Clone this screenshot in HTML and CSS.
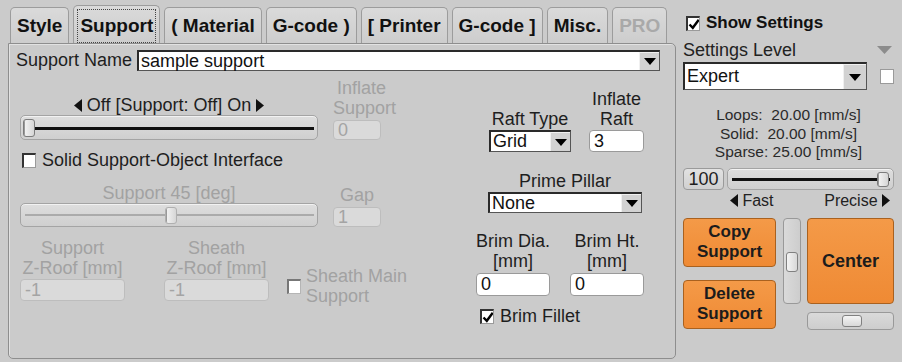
FILE: index.html
```html
<!DOCTYPE html>
<html lang="en">
<head>
  <meta charset="UTF-8">
  <title>Support Settings</title>
  <link rel="stylesheet" href="styles.css">
</head>
<body>
  <div class="app">
    <div class="main">
      <div class="tabs">
        <div class="tab">Style</div>
        <div class="tab active"><span>Support</span></div>
        <div class="tab">( Material</div>
        <div class="tab">G-code )</div>
        <div class="tab">[ Printer</div>
        <div class="tab">G-code ]</div>
        <div class="tab">Misc.</div>
        <div class="tab off">PRO</div>
      </div>

      <div class="panel">
        <div class="name-row">
          <span class="lbl">Support Name</span>
          <div class="select wide"><span class="val">sample support</span><i class="drop"></i></div>
        </div>

        <div class="body">
          <!-- left side: support sliders and roofs -->
          <div class="col-left">
            <div class="row row-a">
              <div class="slide-group">
                <div class="cap"><svg class="tri" width="8" height="13"><polygon points="8,0 8,13 0,6.5"/></svg> Off [Support: Off] On <svg class="tri" width="8" height="13"><polygon points="0,0 0,13 8,6.5"/></svg></div>
                <div class="slider tall">
                  <div class="line"></div>
                  <div class="thumb" style="left: 2px;"></div>
                </div>
              </div>
              <div class="small-group off inflate">
                <div class="cap">Inflate<br>Support</div>
                <input class="field small" value="0" disabled>
              </div>
            </div>

            <div class="check-row">
              <span class="box"></span>
              <span>Solid Support-Object Interface</span>
            </div>

            <div class="row row-b">
              <div class="slide-group off">
                <div class="cap">Support 45 [deg]</div>
                <div class="slider">
                  <div class="line"></div>
                  <div class="thumb" style="left: 144px;"></div>
                </div>
              </div>
              <div class="small-group off">
                <div class="cap">Gap</div>
                <input class="field small" value="1" disabled>
              </div>
            </div>

            <div class="row row-c">
              <div class="roof-group off">
                <div class="cap">Support<br>Z-Roof [mm]</div>
                <input class="field roof" value="-1" disabled>
              </div>
              <div class="roof-group off">
                <div class="cap">Sheath<br>Z-Roof [mm]</div>
                <input class="field roof" value="-1" disabled>
              </div>
              <div class="sheath off">
                <span class="box"></span>
                <span class="cap">Sheath Main<br>Support</span>
              </div>
            </div>
          </div>

          <!-- right side: raft, pillar, brim -->
          <div class="col-right">
            <div class="raft-row">
              <div class="raft-type">
                <div class="cap">Raft Type</div>
                <div class="select"><span class="val">Grid</span><i class="drop"></i></div>
              </div>
              <div class="raft-inflate">
                <div class="cap">Inflate<br>Raft</div>
                <input class="field" value="3">
              </div>
            </div>

            <div class="prime">
              <div class="cap">Prime Pillar</div>
              <div class="select"><span class="val">None</span><i class="drop"></i></div>
            </div>

            <div class="brim-row">
              <div class="brim-group">
                <div class="cap">Brim Dia.<br>[mm]</div>
                <input class="field" value="0">
              </div>
              <div class="brim-group">
                <div class="cap">Brim Ht.<br>[mm]</div>
                <input class="field" value="0">
              </div>
            </div>

            <div class="check-row fillet">
              <span class="box"><svg width="12" height="12"><path d="M1.5 6.5 L4.8 9.8 L10.8 1.8"/></svg></span>
              <span>Brim Fillet</span>
            </div>
          </div>
        </div>
      </div>
    </div>

    <div class="side">
      <div class="show-row">
        <span class="box"><svg width="12" height="12"><path d="M1.5 6.5 L4.8 9.8 L10.8 1.8"/></svg></span>
        <span>Show Settings</span>
      </div>
      <div class="level-row">
        <span>Settings Level</span>
        <svg width="15" height="8"><polygon points="0,0 15,0 7.5,8" fill="#8c8c8c"/></svg>
      </div>
      <div class="level-select">
        <div class="select big"><span class="val">Expert</span><i class="drop"></i></div>
        <span class="box plain"></span>
      </div>
      <div class="speeds">Loops:  20.00 [mm/s]
Solid:  20.00 [mm/s]
Sparse: 25.00 [mm/s]</div>
      <div class="quality">
        <div class="num">100</div>
        <div class="slider q">
          <div class="line"></div>
          <div class="thumb" style="left: 149px;"></div>
        </div>
      </div>
      <div class="fast-row">
        <span><svg class="tri" width="8" height="13"><polygon points="8,0 8,13 0,6.5"/></svg> Fast</span>
        <span>Precise <svg class="tri" width="8" height="13"><polygon points="0,0 0,13 8,6.5"/></svg></span>
      </div>
      <div class="actions">
        <div class="btn-col">
          <button class="orange">Copy<br>Support</button>
          <button class="orange">Delete<br>Support</button>
        </div>
        <div class="vscroll"><span class="knob"></span></div>
        <div class="center-col">
          <button class="orange center">Center</button>
          <div class="hscroll"><span class="knob"></span></div>
        </div>
      </div>
    </div>
  </div>
</body>
</html>
```

FILE: styles.css
```css
body {
  margin: 0;
  width: 902px;
  height: 362px;
  overflow: hidden;
  background-color: #cbcbcb;
  font-family: "Liberation Sans", Arial, sans-serif;
  font-size: 18px;
  color: #1e1e1e;
}
.app {
  display: flex;
  padding: 5px 0 0 8px;
}
.main {
  width: 668px;
}
.tabs {
  display: flex;
  align-items: flex-end;
  gap: 4px;
  height: 38px;
  padding-left: 2px;
}
.tab {
  box-sizing: border-box;
  height: 36px;
  padding: 0 6px;
  border: 1px solid #9c9c9c;
  border-bottom: none;
  border-radius: 5px 5px 0 0;
  background: linear-gradient(#dadada, #cdcdcd);
  font-size: 19px;
  font-weight: bold;
  line-height: 35px;
  color: #111;
}
.tab.active {
  height: 38px;
  padding: 3px 3px 0;
}
.tab.active span {
  display: block;
  padding: 0 2px;
  border: 1px dotted #444;
  line-height: 32px;
}
.tab.off {
  color: #a9a9a9;
}
.panel {
  box-sizing: border-box;
  height: 316px;
  border: 1px solid #8e8e8e;
  border-radius: 0 5px 5px 5px;
  box-shadow: inset 1px 1px 0 #e2e2e2;
}
.name-row {
  display: flex;
  align-items: center;
  gap: 5px;
  padding: 6px 15px 0 7px;
}
.select {
  display: flex;
  box-sizing: border-box;
  height: 22px;
  background: #fff;
  border: 1px solid #2a2a2a;
  border-top-width: 2px;
  border-left-width: 2px;
  border-right-color: #555;
  border-bottom-color: #555;
}
.select.wide {
  flex: 1;
  height: 21px;
}
.select .val {
  flex: 1;
  padding-left: 2px;
  font-size: 18px;
  line-height: 18px;
  color: #111;
}
.drop {
  width: 19px;
  background: #d2d2d2;
  border-left: 1px solid #f0f0f0;
  border-top: 1px solid #f0f0f0;
  display: flex;
  align-items: center;
  justify-content: center;
}
.drop::after {
  content: "";
  border-left: 6px solid transparent;
  border-right: 6px solid transparent;
  border-top: 7px solid #000;
}
.body {
  display: flex;
  align-items: flex-start;
  padding-left: 11px;
}
.col-left {
  width: 370px;
  flex-shrink: 0;
}
.cap {
  line-height: 20px;
  text-align: center;
  white-space: nowrap;
}
.off {
  color: #a2a2a2;
}
.tri {
  fill: #111;
  vertical-align: -1px;
}
.row {
  display: flex;
  align-items: flex-end;
  gap: 15px;
}
.row > * {
  flex-shrink: 0;
}
.row-a {
  margin-top: 7px;
}
.slide-group {
  width: 298px;
}
.slider {
  position: relative;
  box-sizing: border-box;
  height: 24px;
  border: 1px solid #a4a4a4;
  border-radius: 5px;
  background: linear-gradient(#dedede, #cfcfcf);
  box-shadow: inset 0 1px 0 #f2f2f2;
}
.slider.tall {
  height: 25px;
}
.slider .line {
  position: absolute;
  left: 4px;
  right: 3px;
  top: 50%;
  height: 3px;
  margin-top: -1px;
  background: #111;
}
.off .slider .line {
  background: #ababab;
  height: 2px;
}
.slider .thumb {
  position: absolute;
  top: 3px;
  bottom: 2px;
  width: 12px;
  box-sizing: border-box;
  border: 1px solid #7c7c7c;
  border-radius: 3px;
  background: linear-gradient(90deg, #f4f4f4, #d6d6d6);
  box-shadow: inset 3px 0 0 -2px #999;
}
.off .slider .thumb {
  border-color: #b0b0b0;
}
.small-group {
  width: 48px;
  display: flex;
  flex-direction: column;
  align-items: center;
}
.small-group.inflate {
  width: 57px;
  align-items: flex-start;
}
.field {
  box-sizing: border-box;
  height: 22px;
  margin: 1px 0 0;
  padding: 0 4px;
  border: 1px solid #9a9a9a;
  border-radius: 4px;
  background: #fff;
  font-family: "Liberation Sans", Arial, sans-serif;
  font-size: 18px;
  color: #111;
  width: 100%;
}
.field:disabled {
  background: #dadada;
  border-color: #bdbdbd;
  color: #a4a4a4;
}
.field.small {
  width: 48px;
  height: 20px;
  margin-top: 2px;
}
.inflate .cap {
  width: 57px;
}
.check-row {
  display: flex;
  align-items: center;
  gap: 6px;
  height: 20px;
  margin-top: 10px;
  padding-left: 2px;
}
.box {
  box-sizing: border-box;
  width: 14px;
  height: 15px;
  flex-shrink: 0;
  background: #fff;
  border: 1px solid #9a9a9a;
  border-top: 2px solid #333;
  border-left: 2px solid #333;
  display: flex;
  align-items: center;
  justify-content: center;
}
.box svg path {
  fill: none;
  stroke: #000;
  stroke-width: 2.4;
}
.off .box {
  border-color: #b5b5b5;
  border-top-color: #777;
  border-left-color: #777;
}
.row-b {
  margin-top: 13px;
}
.row-c {
  margin-top: 11px;
  gap: 39px;
}
.roof-group {
  width: 105px;
}
.field.roof {
  margin-top: 1px;
}
.sheath {
  display: flex;
  align-items: center;
  gap: 5px;
  margin-left: -21px;
  margin-bottom: -5px;
}
.sheath .cap {
  text-align: left;
}
.col-right {
  width: 168px;
  margin-left: 86px;
}
.raft-row {
  display: flex;
  align-items: flex-end;
  margin-top: 18px;
}
.raft-type {
  width: 82px;
  margin-left: 13px;
}
.raft-type .select {
  margin-top: 1px;
}
.raft-inflate {
  width: 55px;
  margin-left: 18px;
}
.prime {
  width: 154px;
  margin: 19px 0 0 12px;
}
.prime .select {
  margin-top: 1px;
  height: 21px;
}
.brim-row {
  display: flex;
  gap: 20px;
  margin-top: 18px;
}
.brim-group {
  width: 74px;
}
.brim-group .field {
  height: 23px;
  margin-top: 2px;
}
.fillet {
  padding-left: 4px;
}
.side {
  width: 211px;
  margin-left: 7px;
}
.show-row {
  display: flex;
  align-items: center;
  gap: 6px;
  height: 20px;
  margin-top: 8px;
  padding-left: 3px;
  font-size: 17px;
  font-weight: bold;
  color: #111;
}
.level-row {
  display: flex;
  align-items: center;
  justify-content: space-between;
  height: 20px;
  margin-top: 7px;
  padding-right: 2px;
  color: #222;
}
.level-select {
  display: flex;
  align-items: center;
  gap: 13px;
  margin-top: 2px;
}
.select.big {
  width: 184px;
  height: 28px;
}
.select.big .val {
  line-height: 25px;
}
.select.big .drop {
  width: 22px;
}
.box.plain {
  border: 1px solid #9a9a9a;
}
.speeds {
  margin-top: 16px;
  white-space: pre;
  text-align: center;
  font-size: 15.5px;
  line-height: 18.5px;
  color: #2a2a2a;
}
.quality {
  display: flex;
  gap: 3px;
  margin-top: 6px;
}
.num {
  box-sizing: border-box;
  width: 41px;
  height: 22px;
  border: 1px solid #9a9a9a;
  border-radius: 4px;
  background: linear-gradient(#e2e2e2, #d0d0d0);
  font-size: 18px;
  line-height: 20px;
  text-align: center;
}
.slider.q {
  flex: 1;
  height: 22px;
}
.fast-row {
  display: flex;
  justify-content: space-between;
  height: 18px;
  margin-top: 2px;
  padding: 0 4px 0 47px;
  font-size: 16px;
  line-height: 18px;
  color: #222;
}
.actions {
  display: flex;
  align-items: flex-start;
  margin-top: 8px;
}
.btn-col {
  display: flex;
  flex-direction: column;
  gap: 13px;
  width: 93px;
}
button.orange {
  box-sizing: border-box;
  height: 49px;
  border: 1px solid #a9611f;
  border-radius: 4px;
  background: linear-gradient(#f49a48, #ef8a34);
  font-family: "Liberation Sans", Arial, sans-serif;
  font-size: 17px;
  font-weight: bold;
  line-height: 20px;
  color: #1c1c1c;
  padding: 0;
}
.vscroll {
  box-sizing: border-box;
  width: 18px;
  height: 86px;
  margin-left: 7px;
  border: 1px solid #999;
  border-radius: 4px;
  background: linear-gradient(90deg, #dadada, #cdcdcd);
  display: flex;
  align-items: center;
  justify-content: center;
}
.vscroll .knob {
  width: 12px;
  height: 20px;
  box-sizing: border-box;
  border: 1px solid #808080;
  border-radius: 3px;
  background: linear-gradient(90deg, #f4f4f4, #d8d8d8);
  margin-top: 3px;
}
.center-col {
  width: 87px;
  margin-left: 6px;
}
button.orange.center {
  width: 87px;
  height: 86px;
  font-size: 18px;
}
.hscroll {
  box-sizing: border-box;
  height: 18px;
  margin-top: 8px;
  border: 1px solid #999;
  border-radius: 4px;
  background: linear-gradient(#dadada, #cdcdcd);
  display: flex;
  align-items: center;
  justify-content: center;
}
.hscroll .knob {
  width: 20px;
  height: 12px;
  box-sizing: border-box;
  border: 1px solid #808080;
  border-radius: 3px;
  background: linear-gradient(#f4f4f4, #d8d8d8);
  margin-left: 3px;
}
```
